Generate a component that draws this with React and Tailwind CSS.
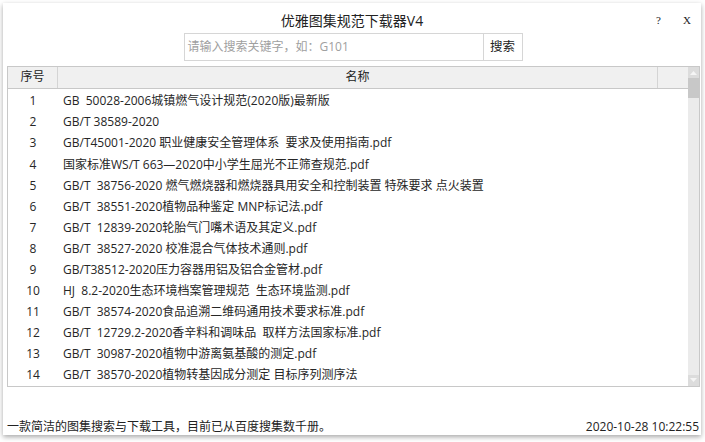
import React from 'react';

const rows = [
  'GB  50028-2006城镇燃气设计规范(2020版)最新版',
  'GB/T 38589-2020',
  'GB/T45001-2020 职业健康安全管理体系  要求及使用指南.pdf',
  '国家标准WS/T 663—2020中小学生屈光不正筛查规范.pdf',
  'GB/T  38756-2020 燃气燃烧器和燃烧器具用安全和控制装置 特殊要求 点火装置',
  'GB/T  38551-2020植物品种鉴定 MNP标记法.pdf',
  'GB/T  12839-2020轮胎气门嘴术语及其定义.pdf',
  'GB/T  38527-2020 校准混合气体技术通则.pdf',
  'GB/T38512-2020压力容器用铝及铝合金管材.pdf',
  'HJ  8.2-2020生态环境档案管理规范  生态环境监测.pdf',
  'GB/T  38574-2020食品追溯二维码通用技术要求标准.pdf',
  'GB/T  12729.2-2020香辛料和调味品  取样方法国家标准.pdf',
  'GB/T  30987-2020植物中游离氨基酸的测定.pdf',
  'GB/T  38570-2020植物转基因成分测定 目标序列测序法',
];

const font = { fontFamily: '"Segoe UI", "Open Sans", "Noto Sans CJK SC", sans-serif' };

export default function App() {
  return (
    <div className="w-[705px] h-[442px] bg-white overflow-hidden pt-[3px] pl-[3px]" style={font}>
      <div className="w-[698px] h-[432px] bg-white flex flex-col shadow-[0_2px_5px_rgba(0,0,0,0.35)] text-[#333]">
        {/* title bar */}
        <div className="relative h-[30px] flex items-center justify-center pt-[4px]">
          <span className="text-[14px] text-[#222]">优雅图集规范下载器V4</span>
          <span className="absolute right-[40px] top-[9px] text-[11px] text-[#222] font-['Liberation_Serif',serif]">?</span>
          <span className="absolute right-[10px] top-[9px] text-[11px] text-[#222] font-['Liberation_Serif',serif]">X</span>
        </div>

        {/* search */}
        <div className="flex justify-center pl-[2px]">
          <div className="flex h-[28px]">
            <div className="w-[300px] border border-[#d6d6d6] flex items-center px-[3px] text-[12px] text-[#a0a0a0]">
              请输入搜索关键字，如：G101
            </div>
            <div className="w-[39px] border border-l-0 border-[#d6d6d6] flex items-center justify-center text-[12.5px] text-[#222]">
              搜索
            </div>
          </div>
        </div>

        {/* table */}
        <div className="mt-[5px] ml-[4px] mr-[1px] h-[321px] border border-[#c8c8c8] flex">
          <div className="flex-1 flex flex-col">
            <div className="h-[26px] flex bg-[#f0f0f0] border-b border-[#c8c8c8] text-[12px] text-[#222]">
              <div className="w-[50px] border-r border-[#d4d4d4] flex items-center justify-center">序号</div>
              <div className="w-[600px] border-r border-[#d4d4d4] flex items-center justify-center">名称</div>
              <div className="flex-1" />
            </div>
            <div className="pt-[2px]">
              {rows.map((r, i) => (
                <div key={i} className="h-[21.1px] flex items-center text-[12px] text-[#262626]">
                  <div className="w-[50px] text-center">{i + 1}</div>
                  <div className="pl-[5px] whitespace-pre">{r}</div>
                </div>
              ))}
            </div>
          </div>
          {/* scrollbar */}
          <div className="w-[11px] bg-[#ebebeb] flex flex-col">
            <div className="h-[11px] bg-[#dcdcdc] flex items-center justify-center">
              <svg width="7" height="5" viewBox="0 0 7 5"><path d="M0 5 L3.5 1 L7 5 Z" fill="#f5f5f5" /></svg>
            </div>
            <div className="h-[20px] bg-[#c8c8c8]" />
            <div className="flex-1" />
            <div className="h-[11px] bg-[#dcdcdc] flex items-center justify-center">
              <svg width="7" height="5" viewBox="0 0 7 5"><path d="M0 0 L3.5 4 L7 0 Z" fill="#f5f5f5" /></svg>
            </div>
          </div>
        </div>

        {/* footer */}
        <div className="flex-1 flex items-end justify-between pb-0 pl-[4px] pr-[2px] text-[12px] text-[#222]">
          <span className="translate-y-[1px]">一款简洁的图集搜索与下载工具，目前已从百度搜集数千册。</span>
          <span className="translate-y-[1px]">2020-10-28 10:22:55</span>
        </div>
      </div>
    </div>
  );
}
